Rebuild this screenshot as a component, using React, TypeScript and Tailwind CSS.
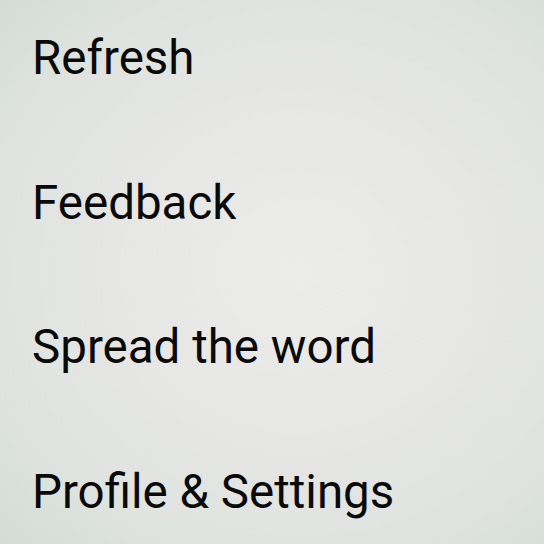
const items = ["Refresh", "Feedback", "Spread the word", "Profile & Settings"]

export default function App() {
  return (
    <div className="w-[544px] h-[544px] overflow-hidden bg-[radial-gradient(ellipse_at_55%_50%,#ececeb_0%,#e6e6e5_45%,#dfe3df_75%,#d2ddd4_100%)] font-['Roboto',sans-serif] text-[#0a0a0a]">
      <div className="flex flex-col gap-[97px] pt-[35px] pl-[32px]">
        {items.map((label) => (
          <div key={label} className="text-[47.5px] leading-none">
            {label}
          </div>
        ))}
      </div>
    </div>
  )
}
